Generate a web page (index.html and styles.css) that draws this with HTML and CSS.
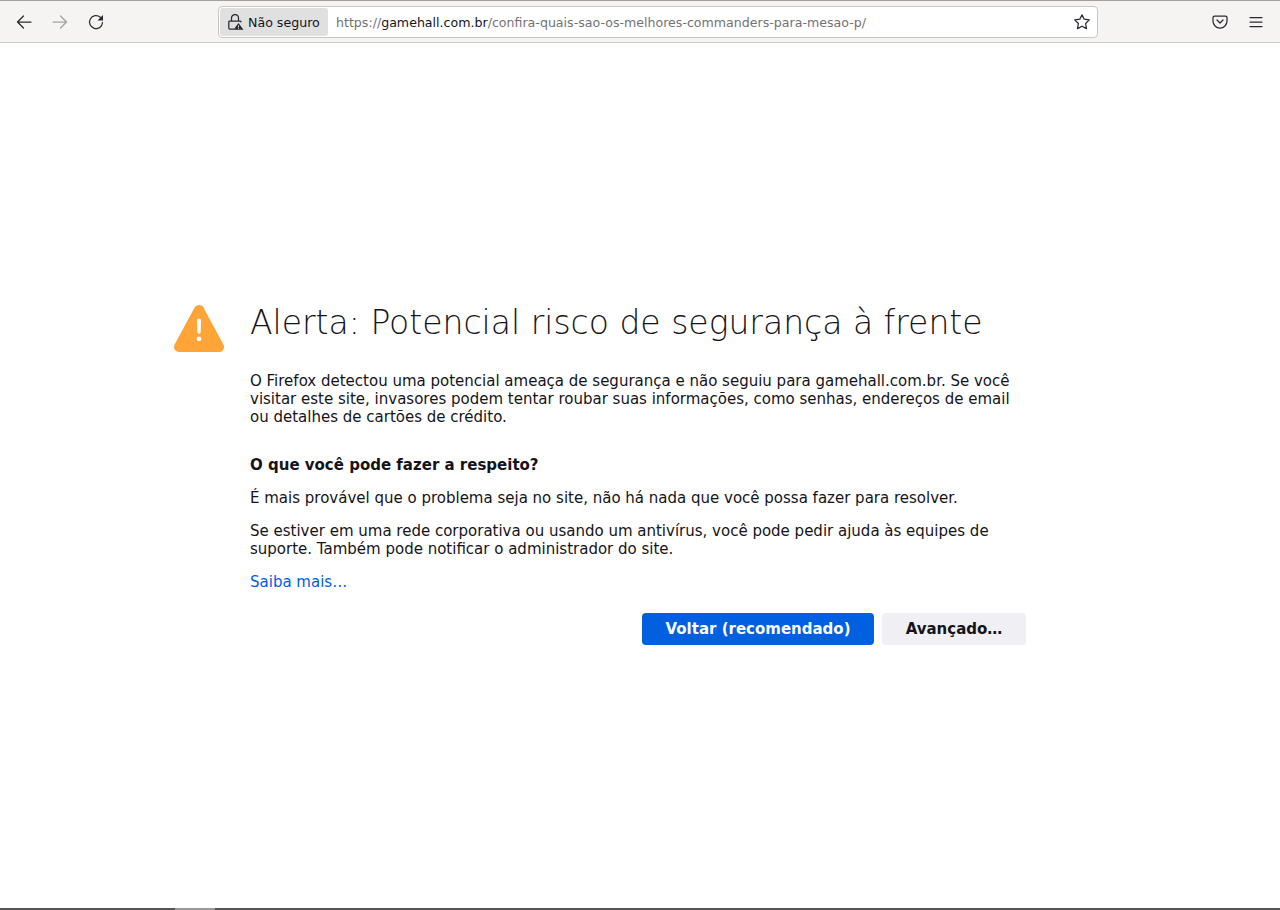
FILE: index.html
```html
<!DOCTYPE html>
<html lang="pt-BR">
<head>
<meta charset="utf-8">
<title>Alerta: Potencial risco de segurança à frente</title>
<link rel="stylesheet" href="styles.css">
</head>
<body>
<header class="toolbar">
  <div class="nav">
    <button class="tool"><svg viewBox="0 0 16 16" width="16" height="16"><path class="ln thin" d="M15 8H1.500M7.500 2 1.500 8l6 6"/></svg></button>
    <button class="tool dim"><svg viewBox="0 0 16 16" width="16" height="16"><path class="ln thin" d="M1 8h13.500M8.500 2l6 6-6 6"/></svg></button>
    <button class="tool"><svg viewBox="0 0 16 16" width="16" height="16"><path class="ln thin" d="M14.500 8.500A6.500 6.500 0 1 1 12.300 3.200L14.500 5.500"/><path class="fl" d="M15 1v5.500H9.500z"/></svg></button>
  </div>
  <div class="urlbar">
    <div class="identity">
      <svg viewBox="0 0 16 16" width="16" height="16"><path class="ln thin" d="M3.500 7V4a3.500 3.500 0 0 1 7 0V7M5.500 15H1.800a1 1 0 0 1-1-1V8a1 1 0 0 1 1-1h10.400l.8.8"/><path class="fl" d="M10.500 9 15.500 15.800H5.500z"/><path class="wh" d="M10.100 11.200h.8v2.300h-.8zM10.100 14h.8v.8h-.8z"/></svg>
      <span>Não seguro</span>
    </div>
    <div class="url"><span class="grey">https://</span>gamehall.com.br<span class="grey">/confira-quais-sao-os-melhores-commanders-para-mesao-p/</span></div>
    <svg class="star" viewBox="0 0 16 16" width="16" height="16"><path class="ln thin" d="M8 .8l2.200 4.400 5.100.7-3.700 3.600.9 5.100L8 12.200l-4.500 2.400.9-5.100L.7 5.900l5.100-.7z"/></svg>
  </div>
  <div class="right">
    <svg viewBox="0 0 16 16" width="16" height="16"><path class="ln thin" d="M2.500 2h11A1.500 1.500 0 0 1 15 3.500V7a7 7 0 0 1-14 0V3.500A1.500 1.500 0 0 1 2.500 2z"/><path class="ln thin" d="M5 6l3 3 3-3"/></svg>
    <svg viewBox="0 0 16 16" width="16" height="16"><path class="ln thin" d="M2 3.500h12M2 8h12M2 12.500h12"/></svg>
  </div>
</header>
<main class="page">
  <div class="container">
    <div class="alert-icon">
      <svg viewBox="0 0 50 47" width="50" height="47"><path class="warn" d="M25 5 L45 42 H5 Z"/><path class="warn-mark" d="M23 15.500a2 2 0 0 1 4 0l-.3 11.500a1.700 1.700 0 0 1-3.400 0zM25 31.500a2.200 2.200 0 1 1 0 4.800 2.200 2.200 0 1 1 0-4.800z"/></svg>
    </div>
    <div class="content">
      <h1>Alerta: Potencial risco de segurança à frente</h1>
      <p class="intro">O Firefox detectou uma potencial ameaça de segurança e não seguiu para gamehall.com.br. Se você visitar este site, invasores podem tentar roubar suas informações, como senhas, endereços de email ou detalhes de cartões de crédito.</p>
      <h2>O que você pode fazer a respeito?</h2>
      <p class="one">É mais provável que o problema seja no site, não há nada que você possa fazer para resolver.</p>
      <p class="two">Se estiver em uma rede corporativa ou usando um antivírus, você pode pedir ajuda às equipes de suporte. Também pode notificar o administrador do site.</p>
      <a class="more" href="#">Saiba mais…</a>
      <div class="actions">
        <button class="btn primary">Voltar (recomendado)</button>
        <button class="btn">Avançado…</button>
      </div>
    </div>
  </div>
</main>
<footer class="bottom"><div class="thumb"></div></footer>
</body>
</html>
```
FILE: styles.css
```css
* { box-sizing: border-box; }
html, body { margin: 0; height: 100%; }
body { width: 1280px; height: 910px; overflow: hidden; background: #fff; display: flex; flex-direction: column; font-family: "DejaVu Sans", sans-serif; color: #15141a; }
.toolbar { height: 43px; flex: none; display: flex; align-items: center; background: #f5f4f2; border-top: 1px solid #a3a19e; border-bottom: 1px solid #cfcdc9; position: relative; }
.nav { display: flex; gap: 4px; padding-left: 16px; width: 218px; flex: none; }
.tool { width: 32px; height: 32px; border: 0; background: none; padding: 0; margin: 0; display: flex; align-items: center; justify-content: flex-start; }
.tool.dim { opacity: .4; }
.ln { fill: none; stroke: #2b2a33; stroke-width: 1.500; stroke-linecap: round; stroke-linejoin: round; }
.ln.thin { stroke-width: 1.250; }
.fl { fill: #2b2a33; }
.wh { fill: #fff; }
.urlbar { width: 880px; height: 32px; flex: none; background: #fff; border: 1px solid #c9c7c4; border-radius: 4px; display: flex; align-items: center; padding: 1px 7px 0 1px; }
.identity { height: 28px; display: flex; align-items: center; gap: 4px; background: #e0e0e0; border-radius: 3px; padding: 0 8px; width: 108px; flex: none; font-size: 12.600px; color: #15141a; white-space: nowrap; }
.url { flex: 1; padding-left: 8px; font-size: 12.600px; white-space: nowrap; color: #15141a; }
.grey { color: #737276; }
.right { display: flex; gap: 20px; margin-left: 114px; }
.page { flex: 1; }
.container { display: flex; margin-left: 174px; padding-top: 260px; }
.alert-icon { width: 76px; flex: none; padding-top: 2px; }
.alert-icon svg { display: block; }
.warn { fill: #ffa436; stroke: #ffa436; stroke-width: 10; stroke-linejoin: round; }
.warn-mark { fill: #fff; }
.content { width: 776px; }
h1 { margin: 0; font-size: 33px; font-weight: 200; line-height: 40px; color: #15141a; }
p { margin: 0; font-size: 15px; line-height: 18px; width: 762px; }
.intro { margin-top: 29px; }
h2 { margin: 30px 0 0; font-size: 15px; font-weight: 700; line-height: 18px; }
.one { margin-top: 15px; }
.two { margin-top: 15px; }
.more { display: block; margin-top: 15px; font-size: 15px; line-height: 18px; color: #0060df; text-decoration: none; }
.actions { display: flex; justify-content: flex-end; gap: 8px; margin-top: 22px; }
.btn { height: 32px; width: 144px; padding: 0; border: 0; border-radius: 4px; background: #f0f0f4; color: #15141a; font: 700 15px "DejaVu Sans", sans-serif; }
.btn.primary { width: 232px; background: #0060df; color: #fbfbfe; }
.bottom { height: 2px; flex: none; background: #555; position: relative; display: flex; }
.thumb { width: 40px; height: 2px; margin-left: 175px; background: #999; }
```
